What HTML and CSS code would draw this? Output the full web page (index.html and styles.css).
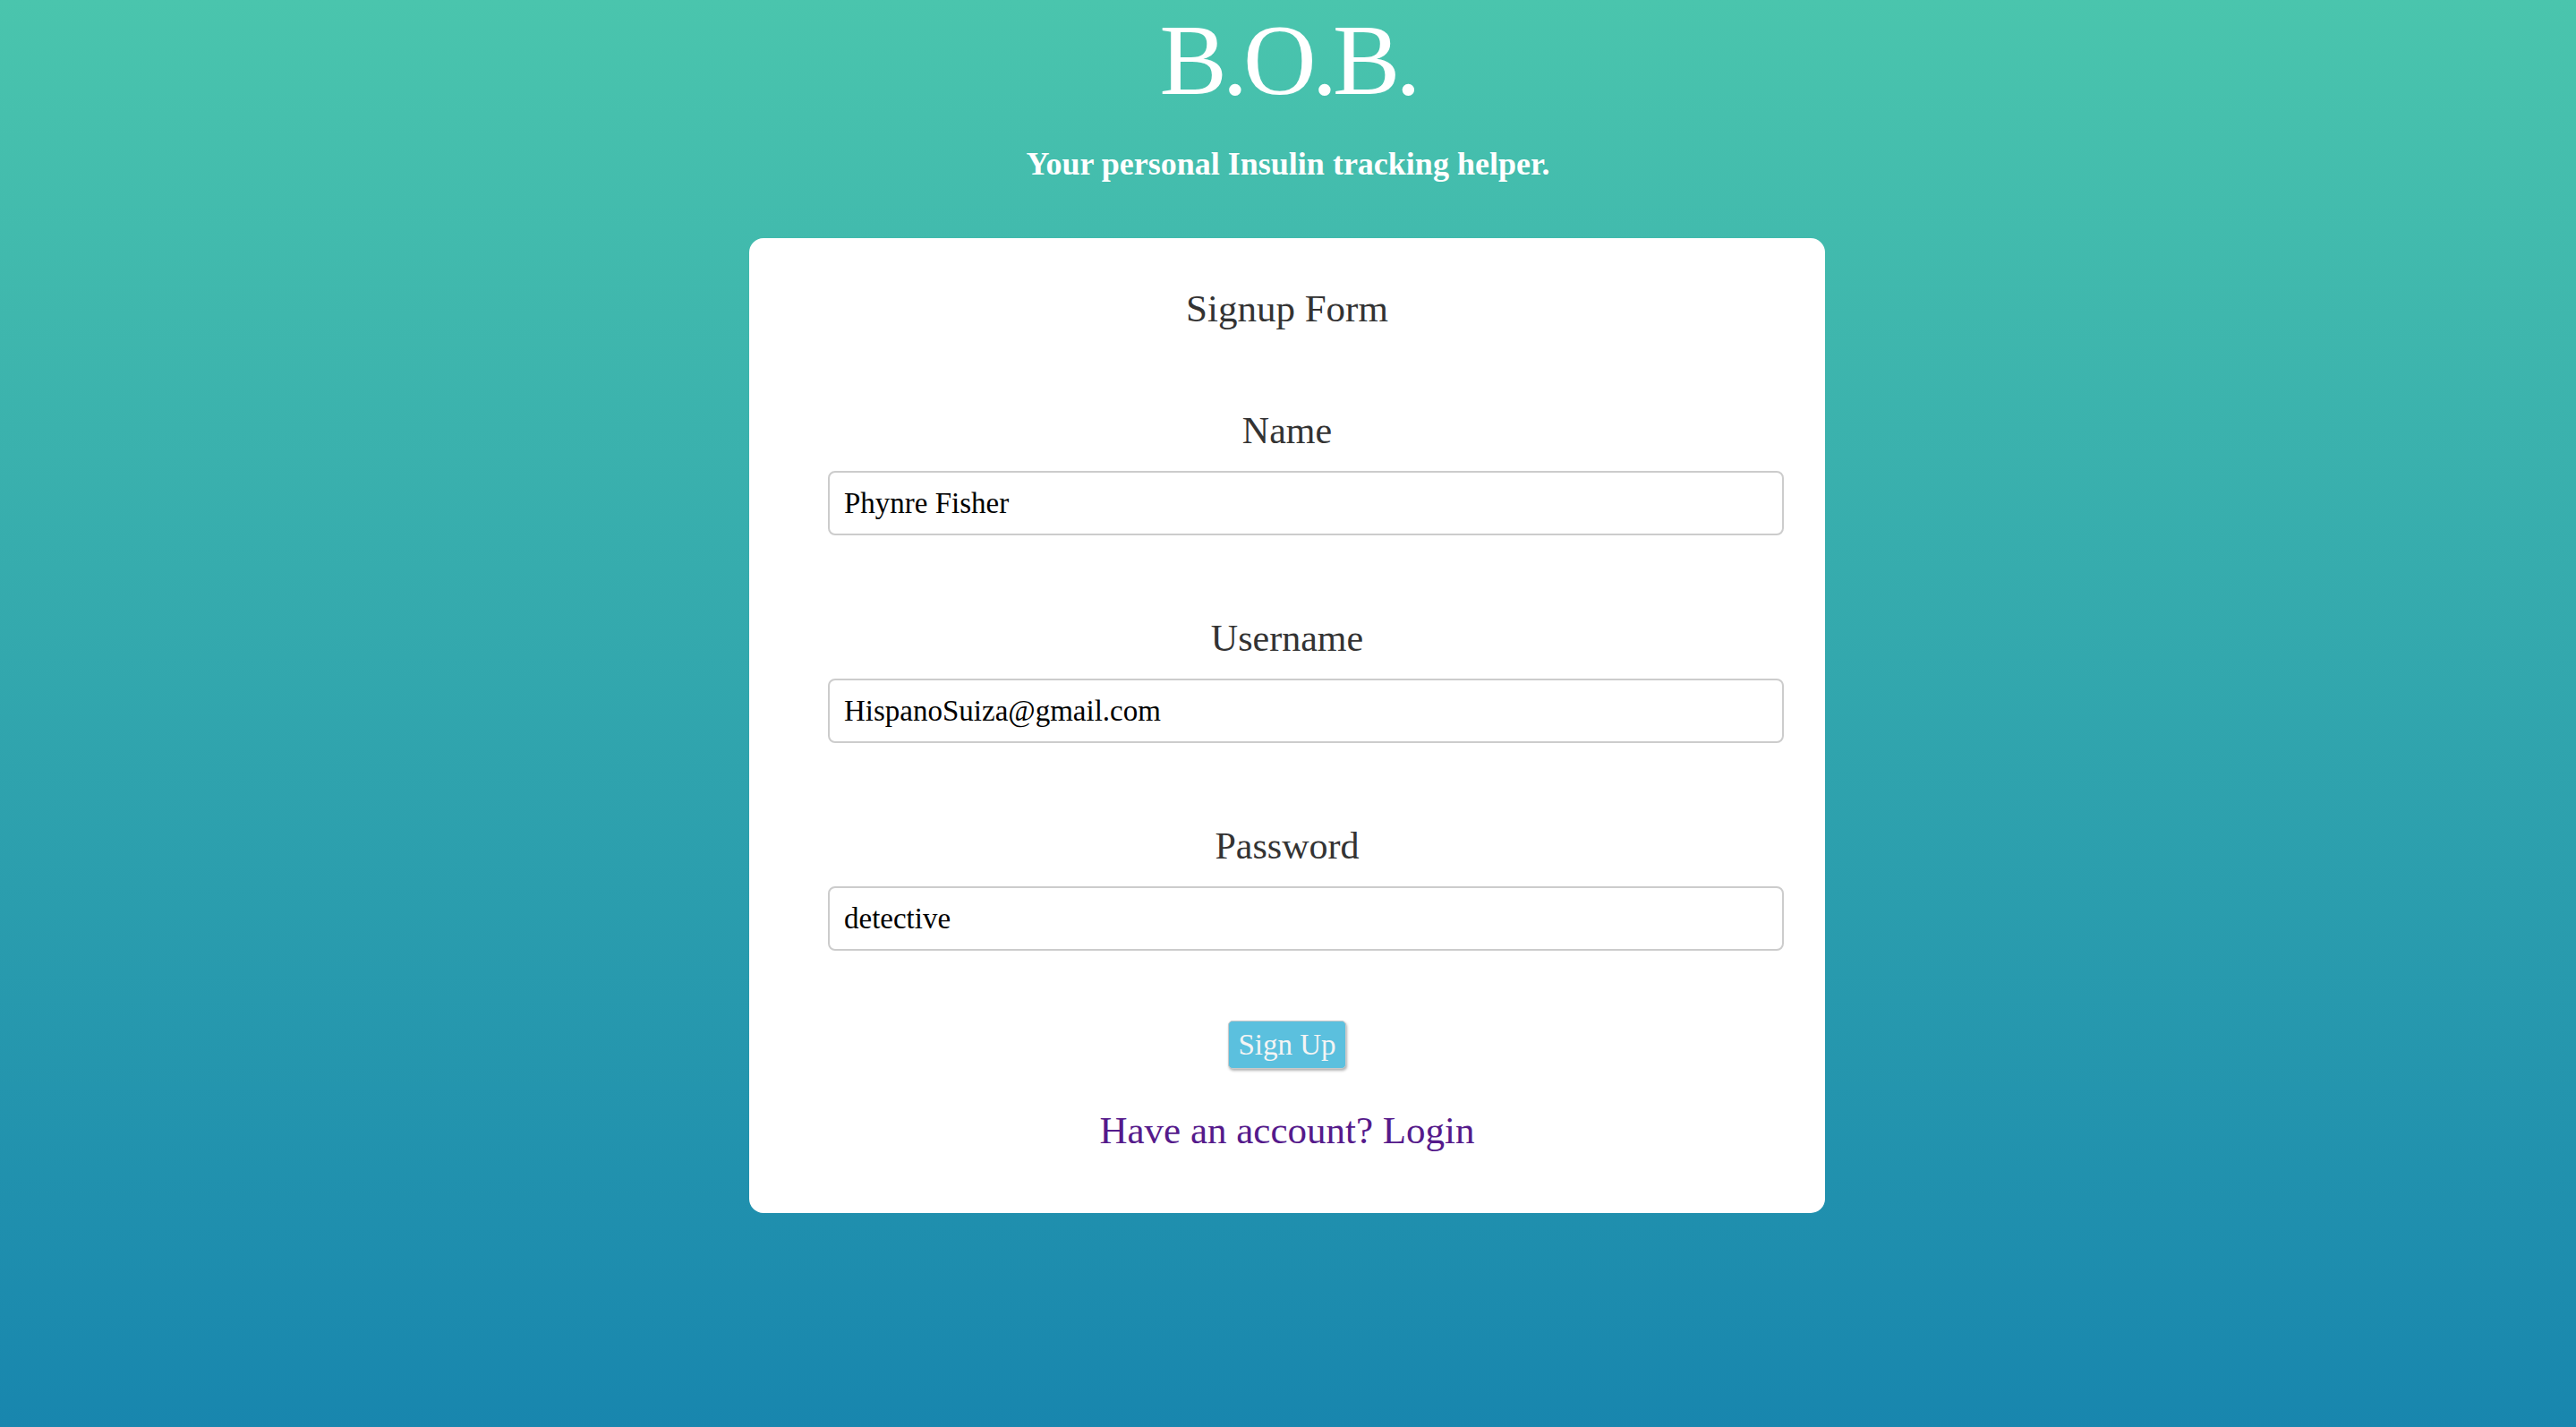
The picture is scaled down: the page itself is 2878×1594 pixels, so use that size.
FILE: index.html
```html
<!DOCTYPE html>
<html lang="en">
<head>
<meta charset="utf-8">
<title>B.O.B. Signup</title>
<link rel="stylesheet" href="styles.css">
</head>
<body>
<main class="page">
  <header class="hero">
    <h1 class="brand">B.O.B.</h1>
    <p class="tagline">Your personal Insulin tracking helper.</p>
  </header>
  <section class="card">
    <h2 class="card-title">Signup Form</h2>
    <form class="form">
      <div class="field">
        <label class="field-label" for="name">Name</label>
        <input class="field-input" id="name" type="text" value="Phynre Fisher">
      </div>
      <div class="field">
        <label class="field-label" for="username">Username</label>
        <input class="field-input" id="username" type="text" value="HispanoSuiza@gmail.com">
      </div>
      <div class="field field-last">
        <label class="field-label" for="password">Password</label>
        <input class="field-input" id="password" type="text" value="detective">
      </div>
      <div class="actions">
        <button class="btn" type="button">Sign Up</button>
      </div>
      <a class="login-link" href="#">Have an account? Login</a>
    </form>
  </section>
</main>
</body>
</html>
```
FILE: styles.css
```css
html, body {
  margin: 0;
  padding: 0;
  height: 100%;
}
body {
  font-family: "Liberation Serif", "DejaVu Serif", serif;
  background: linear-gradient(to bottom, #4ac5ad 0%, #1886ae 100%);
  min-height: 100vh;
}
.page {
  display: flex;
  flex-direction: column;
  align-items: center;
  min-height: 100vh;
}
.hero {
  display: flex;
  flex-direction: column;
  align-items: center;
  padding-top: 3px;
}
.brand {
  margin: 0;
  font-size: 113px;
  line-height: 128px;
  font-weight: normal;
  letter-spacing: -5px;
  color: #ffffff;
}
.tagline {
  margin: 32px 0 0 0;
  font-size: 36px;
  line-height: 40px;
  font-weight: bold;
  color: #ffffff;
}
.card {
  margin: 63px 2px 0 0;
  width: 1202px;
  box-sizing: border-box;
  background: #ffffff;
  border-radius: 16px;
  padding: 53px 46px 66px 46px;
  text-align: center;
  color: #333333;
}
.card-title {
  margin: 0;
  font-size: 43px;
  line-height: 52px;
  font-weight: normal;
}
.form {
  display: flex;
  flex-direction: column;
  margin-top: 86px;
}
.field {
  display: flex;
  flex-direction: column;
  margin-bottom: 91px;
}
.field-last {
  margin-bottom: 78px;
}
.field-label {
  font-size: 42px;
  line-height: 48px;
  color: #333333;
}
.field-input {
  margin: 21px 0 0 42px;
  height: 72px;
  box-sizing: border-box;
  border: 2px solid #cccccc;
  border-radius: 8px;
  padding: 0 16px;
  font-family: "Liberation Serif", "DejaVu Serif", serif;
  font-size: 33px;
  color: #000000;
  background: #ffffff;
}
.actions {
  display: flex;
  justify-content: center;
}
.btn {
  font-family: "Liberation Serif", "DejaVu Serif", serif;
  font-size: 33px;
  line-height: 38px;
  padding: 7px 10px;
  border: 1px solid #c9c9c9;
  border-radius: 5px;
  background: #5bc0de;
  color: #f4f4f4;
  box-shadow: 1px 2px 3px rgba(0, 0, 0, 0.3);
}
.login-link {
  margin-top: 43px;
  font-size: 43px;
  line-height: 52px;
  color: #551a8b;
  text-decoration: none;
}
```
